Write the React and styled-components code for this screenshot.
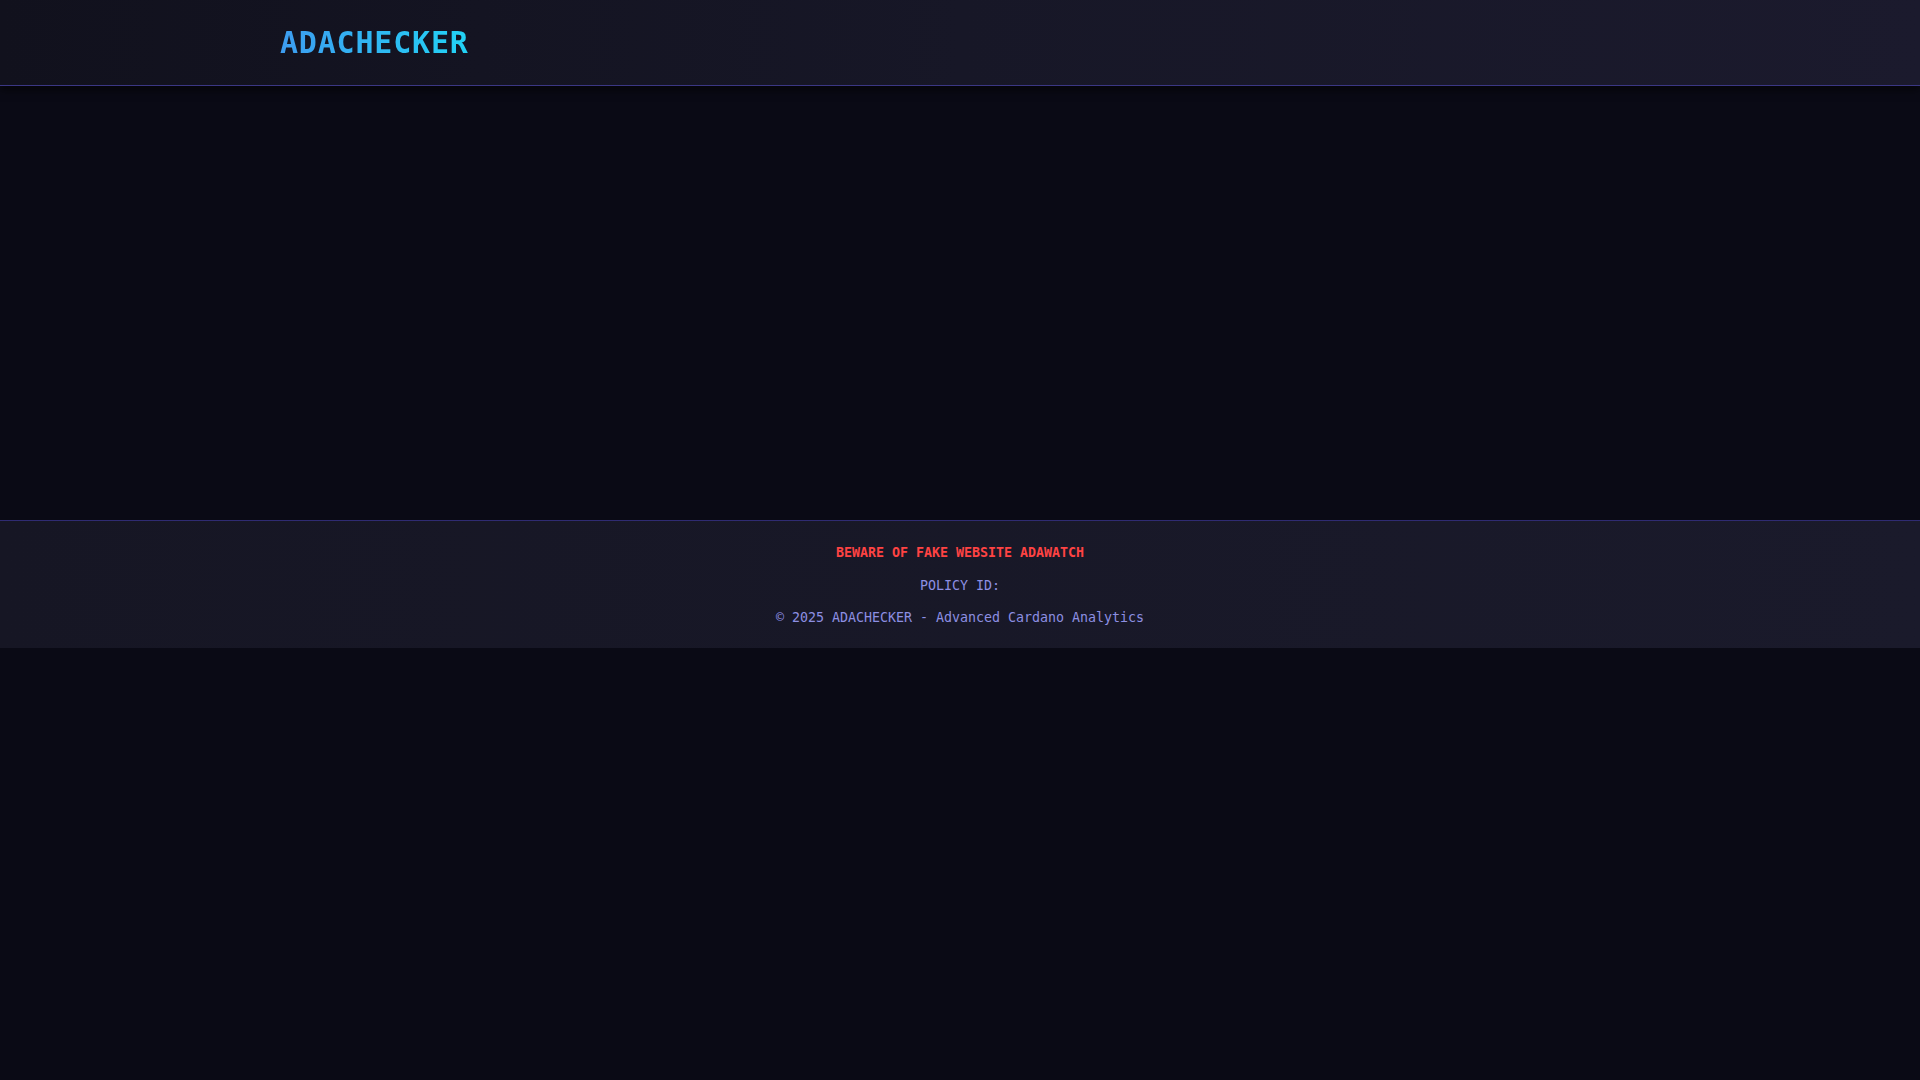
import React from 'react';
import styled, { createGlobalStyle } from 'styled-components';

const GlobalStyle = createGlobalStyle`
  *, *::before, *::after { box-sizing: border-box; }
  html, body {
    margin: 0;
    padding: 0;
    background: #0a0a15;
    font-family: "DejaVu Sans Mono", "Liberation Mono", monospace;
  }
`;

const HeaderBar = styled.header`
  height: 86px;
  background: linear-gradient(90deg, #11111d 0%, #171727 50%, #1b1a2d 100%);
  border-bottom: 1px solid #3b3784;
  box-shadow: 0 4px 8px rgba(0, 0, 0, 0.55);
  position: relative;
  z-index: 1;
`;

const Container = styled.div`
  max-width: 1400px;
  height: 100%;
  margin: 0 auto;
  padding: 0 20px;
  display: flex;
  align-items: center;
`;

const Logo = styled.h1`
  margin: 0;
  font-size: 30px;
  font-weight: bold;
  letter-spacing: 0.8px;
  background: linear-gradient(90deg, #3d9cf0 0%, #22d3f5 100%);
  -webkit-background-clip: text;
  background-clip: text;
  color: transparent;
  line-height: 1;
`;

const Main = styled.main`
  min-height: 434px;
`;

const Footer = styled.footer`
  border-top: 1px solid #2f2b72;
  background: linear-gradient(90deg, #161624 0%, #1a1a2b 100%);
  padding: 22px 20px 20px;
  display: flex;
  flex-direction: column;
  align-items: center;
  gap: 12.5px;
`;

const Line = styled.p`
  margin: 0;
  font-size: 13.3px;
  line-height: 20px;
  font-weight: ${p => (p.warn ? 'bold' : 'normal')};
  color: ${p => (p.warn ? '#ff4343' : '#8d8fe2')};
`;

export default function App() {
  return (
    <>
      <GlobalStyle />
      <HeaderBar>
        <Container>
          <Logo>ADACHECKER</Logo>
        </Container>
      </HeaderBar>
      <Main />
      <Footer>
        <Line warn>BEWARE OF FAKE WEBSITE ADAWATCH</Line>
        <Line>POLICY ID:</Line>
        <Line>© 2025 ADACHECKER - Advanced Cardano Analytics</Line>
      </Footer>
    </>
  );
}
